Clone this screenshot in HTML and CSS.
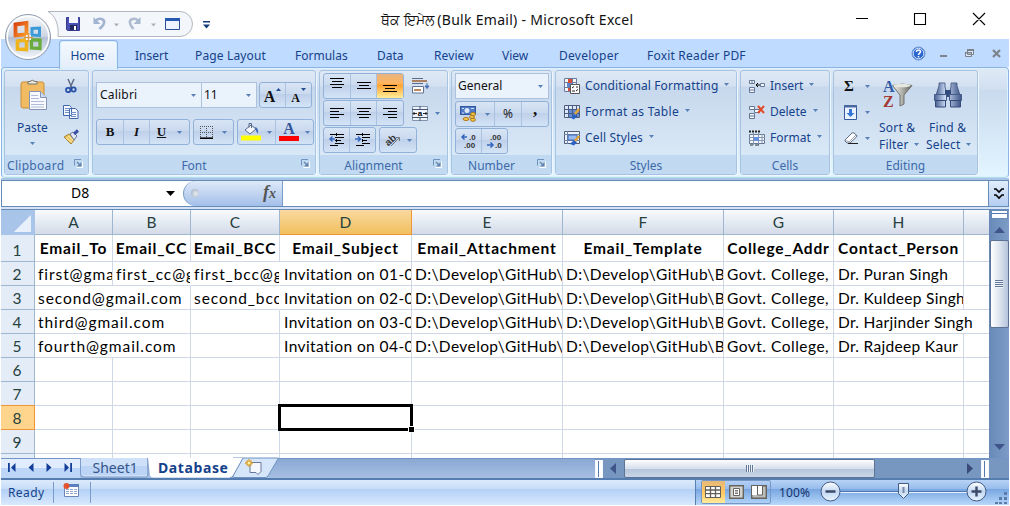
FILE: index.html
```html
<!DOCTYPE html>
<html lang="en">
<head>
<meta charset="utf-8">
<title>Bulk Email - Microsoft Excel</title>
<link rel="stylesheet" href="styles.css">
</head>
<body>
<svg width="0" height="0" class="defs">
  <defs>
    <linearGradient id="orb" x1="0" y1="0" x2="0" y2="1"><stop offset="0" stop-color="#f4f6f9"/><stop offset=".48" stop-color="#cfd6e2"/><stop offset=".52" stop-color="#b3c0d4"/><stop offset="1" stop-color="#f6f9fd"/></linearGradient>
    <linearGradient id="orange" x1="0" y1="0" x2="1" y2="1"><stop offset="0" stop-color="#d9420f"/><stop offset="1" stop-color="#f99a2a"/></linearGradient>
    <linearGradient id="metal" x1="0" y1="0" x2="1" y2="0"><stop offset="0" stop-color="#f2f2f0"/><stop offset=".5" stop-color="#b0b0aa"/><stop offset="1" stop-color="#5e5e5c"/></linearGradient>
    <linearGradient id="lens" x1="0" y1="0" x2="1" y2="0"><stop offset="0" stop-color="#4a6192"/><stop offset=".4" stop-color="#cbdcf5"/><stop offset="1" stop-color="#3f5688"/></linearGradient>
    <linearGradient id="knob" x1="0" y1="0" x2="0" y2="1"><stop offset="0" stop-color="#ffffff"/><stop offset=".5" stop-color="#c3d8f3"/><stop offset="1" stop-color="#e8f3ff"/></linearGradient>
    <symbol id="caret" viewBox="0 0 5 3"><path d="M0 0h5L2.500 3z"/></symbol>
    <symbol id="launch" viewBox="0 0 9 9"><path d="M.5 6.500V.5H7" fill="none" stroke="#6f92bf"/><path d="M2.500 8.500h6v-6" fill="none" stroke="#fff"/><path d="M3 3l3 3" stroke="#6383ad" stroke-width="1.300"/><path d="M7.500 3v4.500H3z" fill="#6383ad"/></symbol>
  </defs>
</svg>

<div class="window">
  <header class="title">
    <div class="orb">
      <svg width="48" height="48" viewBox="0 0 48 48">
        <circle cx="24" cy="24" r="22.500" fill="url(#orb)" stroke="#8d99ab"/>
        <circle cx="24" cy="24" r="20.800" fill="none" stroke="#fff" stroke-width="1.500"/>
        <path d="M11.500 11.500l11-1.500v11.500l-11 1z" fill="none" stroke="url(#orange)" stroke-width="3.800"/>
        <path d="M28 15.500l7.500-.5v7.500l-7.500-.5z" fill="none" stroke="#3a9bd8" stroke-width="3"/>
        <path d="M13.500 28l9-1v9.500l-9-.5z" fill="none" stroke="#efb31c" stroke-width="3.600"/>
        <path d="M27.500 27h8.500v8.500l-8.500-.5z" fill="none" stroke="#69ab3c" stroke-width="3.300"/>
        <path d="M22 22h5v5h-5z" fill="#fff"/><path d="M20 24.500h9M24.500 20v9" stroke="#d99a4b" stroke-width="1.500"/>
      </svg>
    </div>
    <div class="quick">
      <svg width="145" height="26" viewBox="0 0 145 26">
        <path d="M0 .5h132a12.500 12.500 0 0 1 0 25H10C11 15 8 5 0 .5z" fill="#f3f6fb" stroke="#b3b8bf"/>
        <g>
          <path d="M18.500 6.500h13v13h-12l-1-1z" fill="#4a50b4" stroke="#34398e"/>
          <path d="M21 6h9v6h-9z" fill="#f4f6ff"/><path d="M22 14h7v5h-7z" fill="#22265e"/><path d="M26 15h2v4h-2z" fill="#fff"/>
        </g>
        <path d="M48 9.500c3-3 9-2 8 2.500-.5 3-3 4-4.500 6" fill="none" stroke="#a0b3d0" stroke-width="2.600"/><path d="M45.500 6v7h7z" fill="#a0b3d0"/>
        <path d="M66 12.500h5l-2.500 3z" fill="#b0b0b0"/>
        <path d="M90 9.500c-3-3-9-2-8 2.500 .4 3 2 4 3.500 6" fill="none" stroke="#b0bdd0" stroke-width="2.600"/><path d="M92.500 6v7h-7z" fill="#a9b9d0"/>
        <path d="M103 12.500h5l-2.500 3z" fill="#b0b0b0"/>
        <path d="M117.500 7.500h14v11h-14z" fill="#eef4ff" stroke="#2b4f97"/><path d="M117 7h15v3h-15z" fill="#2558b0"/>
      </svg>
      <svg class="more" width="7" height="8" viewBox="0 0 7 8"><path d="M0 0h7v1.500H0zM0 3.500h7L3.500 7.500z" fill="#173b7b"/></svg>
    </div>
    <h1>ਥੋਕ ਇਮੇਲ <span class="name">(Bulk Email) - Microsoft Excel</span></h1>
    <div class="controls">
      <svg width="130" height="16" viewBox="0 0 130 16"><path d="M0 8.500h12M58.500 3.500h11v11h-11zM117 3l12 12M129 3l-12 12" fill="none" stroke="#000" stroke-width="1.100"/></svg>
    </div>
  </header>

  <nav class="tabs">
    <span class="tab active">Home</span><span class="tab t-insert">Insert</span><span class="tab t-page">Page Layout</span><span class="tab t-formulas">Formulas</span><span class="tab t-data">Data</span><span class="tab t-review">Review</span><span class="tab t-view">View</span><span class="tab t-dev">Developer</span><span class="tab t-foxit">Foxit Reader PDF</span>
    <svg class="doc-controls" width="92" height="16" viewBox="0 0 92 16">
      <circle cx="7.500" cy="7.500" r="6.500" fill="#2b66ce" stroke="#6e94cf"/><circle cx="7.500" cy="7.500" r="5.300" fill="none" stroke="#dceaff" stroke-width="1"/>
      <path d="M5.500 6c0-3 4-2.500 4-.3C9.500 7.200 7.500 7 7.500 9M7.500 10v1.500" fill="none" stroke="#fff" stroke-width="1.500"/>
      <path d="M29 9h7v2h-7z" fill="#7d828b"/>
      <path d="M56.500 4.500h6v4h-6zM54.500 6.500h6v4h-6z" fill="#dbe9fc" stroke="#7d828b"/><path d="M56 3h7v2h-7zM54 6h7v1.500h-7z" fill="#7d828b"/>
      <path d="M82 4l7 7M89 4l-7 7" stroke="#7d828b" stroke-width="2.200"/>
    </svg>
  </nav>

  <section class="ribbon">
    <div class="group clipboard">
      <div class="body">
        <div class="paste">
          <svg width="28" height="32" viewBox="0 0 28 32"><rect x="1" y="3" width="23" height="26" rx="2" fill="#f0bb62" stroke="#c98d36"/><path d="M8 5V2.500h2Q12 0 15 2.500h2V5z" fill="#ece9df" stroke="#77736a"/><path d="M9.500 12.500h11l6 6v12h-17z" fill="#f8faff" stroke="#8394b4"/><path d="M20.500 12.500v6h6" fill="#cdd9ec" stroke="#8394b4"/><path d="M11 16.500h7M11 19.500h8M11 22.500h13M11 25.500h13M11 28h13" stroke="#aebcd6"/></svg>
          <span>Paste</span>
          <svg class="caret"><use href="#caret"/></svg>
        </div>
        <div class="clip-tools">
          <svg width="12" height="15" viewBox="0 0 12 15"><path d="M3 0l4 9M9 0L5 9" stroke="#5f6b86" stroke-width="1.500"/><circle cx="3.200" cy="11" r="2.200" fill="none" stroke="#2750a8" stroke-width="1.800"/><circle cx="8.600" cy="10.500" r="2.100" fill="none" stroke="#2750a8" stroke-width="1.800"/></svg>
          <svg width="16" height="14" viewBox="0 0 16 14"><path d="M.5.5h6l2 2v8h-8zM6.500 3.500h6l2.500 2.500v7.500H6.500z" fill="#f3f8ff" stroke="#4167ab"/><path d="M2 3.500h4M2 5.500h4M2 7.500h4M8 7.500h5M8 9.500h5M8 11.500h5" stroke="#7391c8"/></svg>
          <svg width="17" height="15" viewBox="0 0 17 15"><path d="M1 7l5-3 6 5-4 5z" fill="#e9c35e" stroke="#a9843c"/><path d="M7 4l3-2 4 4-3 4z" fill="#e6e9f4" stroke="#65729b"/><path d="M11 4l4-3.500" stroke="#3b52a5" stroke-width="3"/><path d="M3 8l6 4M5 6l5 4" stroke="#fff2b5"/></svg>
        </div>
      </div>
      <footer>Clipboard<svg class="launch"><use href="#launch"/></svg></footer>
    </div>

    <div class="group font">
      <div class="body">
        <div class="row">
          <div class="combo face"><span>Calibri</span><svg class="caret"><use href="#caret"/></svg></div>
          <div class="combo size"><span>11</span><svg class="caret"><use href="#caret"/></svg></div>
          <div class="set grow"><span class="btn"><b class="serif big">A</b><svg width="5" height="3"><path d="M0 3h5L2.500 0z" fill="#254a91"/></svg></span><span class="btn"><b class="serif small">A</b><svg width="5" height="3"><path d="M0 0h5L2.500 3z" fill="#254a91"/></svg></span></div>
        </div>
        <div class="row second">
          <div class="set biu"><span class="btn"><b class="serif">B</b></span><span class="btn"><b class="serif"><i>I</i></b></span><span class="btn under"><b class="serif"><u>U</u></b><svg class="caret"><use href="#caret"/></svg></span></div>
          <div class="set edge"><span class="btn"><svg width="13" height="13" viewBox="0 0 13 13"><path d="M.5 0v12M6.500 0v12M12.500 0v12M0 .5h13M0 6.500h13" stroke="#555" stroke-dasharray="1 1"/><path d="M0 12.200h13" stroke="#000" stroke-width="1.600"/></svg><svg class="caret"><use href="#caret"/></svg></span></div>
          <div class="set paint"><span class="btn"><svg width="20" height="18" viewBox="0 0 20 18"><path d="M4 7l6-5 5 4-6 5z" fill="#f4f7fc" stroke="#58698b"/><path d="M8 4.500V.5h2.500V5" fill="none" stroke="#58698b"/><path d="M14 4q4 1 3 7l-2-3z" fill="#426db8"/><path d="M0 12.500h20v5H0z" fill="#ff0"/></svg><svg class="caret"><use href="#caret"/></svg></span><span class="btn"><span class="ink"><b class="serif">A</b></span><svg class="caret"><use href="#caret"/></svg></span></div>
        </div>
      </div>
      <footer class="offset">Font<svg class="launch"><use href="#launch"/></svg></footer>
    </div>

    <div class="group align">
      <div class="body">
        <div class="row">
          <div class="set three"><span class="btn"><svg width="14" height="16"><path d="M0 .5h14M2 3.500h10M0 6.500h14M2 9.500h10" stroke="#000"/></svg></span><span class="btn"><svg width="14" height="16"><path d="M0 4.500h14M2 7.500h10M0 10.500h14" stroke="#000"/></svg></span><span class="btn hot"><svg width="14" height="16"><path d="M0 7.500h14M2 10.500h10M0 13.500h14" stroke="#000"/></svg></span></div>
          <svg class="wrap" width="17" height="17" viewBox="0 0 17 17"><path d="M0 .5h11M0 5.500h11" stroke="#5b6d8e"/><path d="M0 3h15" stroke="#a0622f" stroke-width="1.500"/><path d="M.5 8.500v6.500h11V8.500z" fill="#fff" stroke="#66758f"/><path d="M2 12h7" stroke="#a0622f" stroke-width="1.500"/><path d="M15 5v4M13 8h4l-2 2.500z" fill="#4a70b4" stroke="#4a70b4"/></svg>
        </div>
        <div class="row">
          <div class="set three"><span class="btn"><svg width="14" height="13"><path d="M0 1.500h14M0 4.500h9M0 7.500h14M0 10.500h9" stroke="#000"/></svg></span><span class="btn"><svg width="14" height="13"><path d="M0 1.500h14M2 4.500h10M0 7.500h14M2 10.500h10" stroke="#000"/></svg></span><span class="btn"><svg width="14" height="13"><path d="M0 1.500h14M5 4.500h9M0 7.500h14M5 10.500h9" stroke="#000"/></svg></span></div>
          <div class="merge"><svg width="16" height="15" viewBox="0 0 16 15"><path d="M.5.5h15v14H.5z" fill="#eef3fc" stroke="#8394ad"/><path d="M0 3.500h16M0 11.500h16M8 0v3M8 12v3" stroke="#455774"/><path d="M1 7.500h4M11 7.500h4M2.500 6L1 7.500 2.500 9M13.500 6L15 7.500 13.500 9" stroke="#222" fill="none"/><text x="5.700" y="10" class="tiny">a</text></svg><svg class="caret"><use href="#caret"/></svg></div>
        </div>
        <div class="row">
          <div class="set two"><span class="btn"><svg width="16" height="14"><path d="M1 1.500h14M6 4.500h9M6 7.500h6M6 10.500h9M1 12.500h8" stroke="#000" stroke-width="1.200"/><path d="M7.500 0v14" stroke="#000" stroke-dasharray="1 1"/><path d="M6 6H1M3.500 3.500L1 6l2.500 2.500" stroke="#3567be" stroke-width="1.500" fill="none"/></svg></span><span class="btn"><svg width="16" height="14"><path d="M1 1.500h14M7 4.500h8M7 7.500h5M7 10.500h8M1 12.500h8" stroke="#000" stroke-width="1.200"/><path d="M7.500 0v14" stroke="#000" stroke-dasharray="1 1"/><path d="M0 6h5M3 3.500L5.500 6 3 8.500" stroke="#3567be" stroke-width="1.500" fill="none"/></svg></span></div>
          <div class="set angle"><span class="btn"><svg width="17" height="16" viewBox="0 0 17 16"><text x="0" y="12" class="ab" transform="rotate(-42 5 9)">ab</text><path d="M6 14l8-8M11 5.500h3.500V9" fill="none" stroke="#777"/></svg><svg class="caret"><use href="#caret"/></svg></span></div>
        </div>
      </div>
      <footer class="offset">Alignment<svg class="launch"><use href="#launch"/></svg></footer>
    </div>

    <div class="group number">
      <div class="body">
        <div class="combo general"><span>General</span><svg class="caret"><use href="#caret"/></svg></div>
        <div class="set money"><span class="btn"><svg width="17" height="16" viewBox="0 0 17 16"><rect x=".5" y=".5" width="15" height="8" fill="#4f79c4" stroke="#31579c"/><circle cx="7" cy="4.500" r="2.500" fill="#dbe8fb"/><path d="M2 2.500h2M11 2.500h3M2 7h2" stroke="#d5e2f8"/><ellipse cx="13" cy="8" rx="2.500" ry="1.500" fill="#f5c84e" stroke="#ad7a1c"/><ellipse cx="12" cy="11" rx="2.500" ry="1.500" fill="#f5c84e" stroke="#ad7a1c"/><ellipse cx="6" cy="13" rx="3" ry="1.500" fill="#f5c84e" stroke="#ad7a1c"/><ellipse cx="13" cy="13.800" rx="2.500" ry="1.500" fill="#f5c84e" stroke="#ad7a1c"/></svg><svg class="caret"><use href="#caret"/></svg></span><span class="btn pct">%</span><span class="btn comma"><b class="serif">,</b></span></div>
        <div class="set decimals"><span class="btn"><svg width="16" height="16" viewBox="0 0 16 16"><text x="8" y="7" class="dec">.0</text><text x="3" y="15" class="dec">.00</text><path d="M6 4H1M3.500 1.500L1 4l2.500 2.500" fill="none" stroke="#3665bd" stroke-width="1.500"/></svg></span><span class="btn"><svg width="16" height="16" viewBox="0 0 16 16"><text x="3" y="7" class="dec">.00</text><text x="8" y="15" class="dec">.0</text><path d="M0 12h6M3.500 9.500L6 12l-2.500 2.500" fill="none" stroke="#3665bd" stroke-width="1.500"/></svg></span></div>
      </div>
      <footer class="offset">Number<svg class="launch"><use href="#launch"/></svg></footer>
    </div>

    <div class="group styles">
      <div class="body list">
        <div class="item"><svg width="16" height="16" viewBox="0 0 16 16"><path d="M.5.5h12v13H.5z" fill="#f4f7fc" stroke="#697a9b"/><path d="M4.500 1v12M8.500 1v12M0 4.500h13M0 9.500h13" stroke="#697a9b"/><path d="M4 1h4v4H4zM4 10h3v3H4z" fill="#d94c36"/><path d="M3 5h6v4H3z" fill="#5b85ce"/><path d="M6.500 6.500h9v9h-9z" fill="#fff" stroke="#555"/><path d="M8 10l2-1.500M8 13h3M12 9h2M12 13l2-1.500" stroke="#222"/></svg><span class="w-cond">Conditional Formatting</span><svg class="caret"><use href="#caret"/></svg></div>
        <div class="item"><svg width="16" height="15" viewBox="0 0 16 15"><path d="M.5.5h15v12H.5z" fill="#dce7fa" stroke="#515d76"/><path d="M4 4h11v8H4z" fill="#648bd0"/><path d="M4.500 0v13M8.500 0v13M12.500 0v13M0 4.500h16M0 8.500h16" stroke="#485b82"/><path d="M7 13l3-4 3 2-3 3.500z" fill="#2862c8"/><path d="M11 9l4-5" stroke="#e1a539" stroke-width="2.500"/></svg><span class="w-table">Format as Table</span><svg class="caret"><use href="#caret"/></svg></div>
        <div class="item"><svg width="16" height="15" viewBox="0 0 16 15"><path d="M.5.5h15v12H.5z" fill="#edf3fd" stroke="#515d76"/><path d="M3.500 0v13M0 3.500h16M0 9.500h16" stroke="#7487a8"/><path d="M4 4h9v5H4z" fill="#9abaf0" stroke="#3e69b7"/><path d="M6 13l4-4 3 2-3 3.500z" fill="#2862c8"/><path d="M11 10l4-5" stroke="#e1a539" stroke-width="2.500"/></svg><span class="w-cell">Cell Styles</span><svg class="caret"><use href="#caret"/></svg></div>
      </div>
      <footer>Styles</footer>
    </div>

    <div class="group cells">
      <div class="body list">
        <div class="item"><svg width="16" height="15" viewBox="0 0 16 15"><path d="M.5 1.500h5v3h-5zM.5 8.500h5v5h-5zM.5 11h5M3 2v2M11.500 4.500h4v3h-4z" fill="#f5f8ff" stroke="#647795"/><path d="M7 6h4M9 4L7 6l2 2" stroke="#000" fill="none"/></svg><span class="w-ins">Insert</span><svg class="caret"><use href="#caret"/></svg></div>
        <div class="item"><svg width="16" height="15" viewBox="0 0 16 15"><path d="M.5 1.500h5v3h-5zM.5 8.500h5v5h-5zM.5 11h5M5.500 4.500h5v3h-5z" fill="#f5f8ff" stroke="#647795"/><path d="M9 1l6 7M15 1L9 8" stroke="#e24a25" stroke-width="2"/></svg><span>Delete</span><svg class="caret"><use href="#caret"/></svg></div>
        <div class="item"><svg width="16" height="16" viewBox="0 0 16 16"><path d="M0 1.500h12" stroke="#222" stroke-width="2" stroke-dasharray="2 1"/><path d="M.5 4.500h15v9H.5z" fill="#f5f8ff" stroke="#647795"/><path d="M4.500 3v12M9.500 3v12M13 4v9M0 7.500h16M0 10.500h16" stroke="#8797ae"/><path d="M5 7h5v4H5z" fill="#6591df"/><path d="M1 15h3M6 15h4" stroke="#333"/></svg><span>Format</span><svg class="caret"><use href="#caret"/></svg></div>
      </div>
      <footer>Cells</footer>
    </div>

    <div class="group editing">
      <div class="body">
        <div class="edit-tools">
          <div><b class="serif sigma">Σ</b><svg class="caret"><use href="#caret"/></svg></div>
          <div><svg width="13" height="15" viewBox="0 0 13 15"><path d="M.5.5h12v14H.5z" fill="#eaf2ff" stroke="#355a9b"/><path d="M0 0h13v2.500H0z" fill="#49689e"/><path d="M5 4h3v4h2.500l-4 4-4-4H5z" fill="#3475d6"/></svg><svg class="caret"><use href="#caret"/></svg></div>
          <div><svg width="14" height="12" viewBox="0 0 14 12"><path d="M1 8l7-7q1-.7 2 0l2.500 2q.8 1 0 2L6 11H3L1 9z" fill="#fff" stroke="#5e6b86"/><path d="M1 8l4 2 7-7" fill="none" stroke="#99a4ba"/><path d="M4 11.500h10" stroke="#222"/></svg><svg class="caret"><use href="#caret"/></svg></div>
        </div>
        <div class="large sort">
          <svg width="30" height="30" viewBox="0 0 30 30"><text x="0" y="13" class="az a">A</text><text x="0" y="28" class="az z">Z</text><path d="M9.500 6.500q10-3 19.500 0L21 16v9l-4 2V16z" fill="url(#metal)" stroke="#73736e"/><ellipse cx="19" cy="6.500" rx="8.500" ry="1.800" fill="#e7e7e1"/></svg>
          <span>Sort &amp;</span><span>Filter<svg class="caret"><use href="#caret"/></svg></span>
        </div>
        <div class="large find">
          <svg width="28" height="26" viewBox="0 0 28 26"><path d="M5 4V1h6v4l2 8H2zM17 5V1h6v3l3 9H15z" fill="url(#lens)" stroke="#50648e"/><path d="M11 8h6v7h-6z" fill="#344b7d"/><path d="M.5 12.500h12v6h-12zM15.500 12.500h12v6h-12z" fill="url(#lens)" stroke="#455b88"/><path d="M1.500 18.500h10v6.500h-10zM16.500 18.500h10v6.500h-10z" fill="url(#lens)" stroke="#344a79"/></svg>
          <span>Find &amp;</span><span>Select<svg class="caret"><use href="#caret"/></svg></span>
        </div>
      </div>
      <footer>Editing</footer>
    </div>
  </section>

  <div class="formula">
    <div class="namebox"><span>D8</span><svg width="9" height="5"><path d="M0 0h9L4.500 5z"/></svg></div>
    <div class="fx"><i class="dot"></i><em>f<small>x</small></em></div>
    <div class="input"></div>
    <div class="expand"><svg width="10" height="12" viewBox="0 0 10 12"><path d="M0 1h2l3 3 3-3h2M0 7h2l3 3 3-3h2" fill="none" stroke="#000" stroke-width="1.600"/></svg></div>
  </div>

  <main class="book">
    <div class="sheet">
      <span class="corner"></span><span class="col">A</span><span class="col">B</span><span class="col">C</span><span class="col sel">D</span><span class="col">E</span><span class="col">F</span><span class="col">G</span><span class="col">H</span><span class="col last"></span>

      <span class="num">1</span><span class="cell head">Email_To</span><span class="cell head">Email_CC</span><span class="cell head">Email_BCC</span><span class="cell head">Email_Subject</span><span class="cell head">Email_Attachment</span><span class="cell head">Email_Template</span><span class="cell head">College_Addr</span><span class="cell head">Contact_Person</span><span class="cell last"></span>

      <span class="num">2</span><span class="cell mail">first@gma</span><span class="cell mail noline">first_cc@g</span><span class="cell mail noline">first_bcc@g</span><span class="cell subject">Invitation on 01-0</span><span class="cell path">D:\Develop\GitHub\</span><span class="cell path">D:\Develop\GitHub\B</span><span class="cell college">Govt. College,</span><span class="cell person">Dr. Puran Singh</span><span class="cell last"></span>

      <span class="num">3</span><span class="cell mail wide">second@gmail.com</span><span class="cell mail noline">second_bcc</span><span class="cell subject">Invitation on 02-0</span><span class="cell path">D:\Develop\GitHub\</span><span class="cell path">D:\Develop\GitHub\B</span><span class="cell college">Govt. College,</span><span class="cell person">Dr. Kuldeep Singh</span><span class="cell last"></span>

      <span class="num">4</span><span class="cell mail wide">third@gmail.com</span><span class="cell"></span><span class="cell subject">Invitation on 03-0</span><span class="cell path">D:\Develop\GitHub\</span><span class="cell path">D:\Develop\GitHub\B</span><span class="cell college">Govt. College,</span><span class="cell person wide last">Dr. Harjinder Singh</span>

      <span class="num">5</span><span class="cell mail wide">fourth@gmail.com</span><span class="cell"></span><span class="cell subject">Invitation on 04-0</span><span class="cell path">D:\Develop\GitHub\</span><span class="cell path">D:\Develop\GitHub\B</span><span class="cell college">Govt. College,</span><span class="cell person">Dr. Rajdeep Kaur</span><span class="cell last"></span>

      <span class="num">6</span><span class="cell"></span><span class="cell"></span><span class="cell"></span><span class="cell"></span><span class="cell"></span><span class="cell"></span><span class="cell"></span><span class="cell"></span><span class="cell last"></span>
      <span class="num above">7</span><span class="cell"></span><span class="cell"></span><span class="cell"></span><span class="cell"></span><span class="cell"></span><span class="cell"></span><span class="cell"></span><span class="cell"></span><span class="cell last"></span>
      <span class="num sel">8</span><span class="cell"></span><span class="cell"></span><span class="cell"></span><span class="cell current"><i class="cursor"></i></span><span class="cell"></span><span class="cell"></span><span class="cell"></span><span class="cell"></span><span class="cell last"></span>
      <span class="num">9</span><span class="cell"></span><span class="cell"></span><span class="cell"></span><span class="cell"></span><span class="cell"></span><span class="cell"></span><span class="cell"></span><span class="cell"></span><span class="cell last"></span>
      <span class="num cut"></span><span class="cell cut"></span><span class="cell cut"></span><span class="cell cut"></span><span class="cell cut"></span><span class="cell cut"></span><span class="cell cut"></span><span class="cell cut"></span><span class="cell cut"></span><span class="cell cut last"></span>
    </div>
    <div class="vscroll">
      <i class="split"></i>
      <svg width="11" height="6"><path d="M0 6h11L5.500 0z" fill="#40568a"/></svg>
      <div class="vthumb"><i></i></div>
      <svg class="down" width="11" height="6"><path d="M0 0h11L5.500 6z" fill="#40568a"/></svg>
    </div>
  </main>

  <div class="sheetbar">
    <div class="steps"><svg width="64" height="9" viewBox="0 0 64 9"><path d="M0 0h1.800v9H0zM7.500 0v9L3 4.500zM25.500 0v9L20.500 4.500zM38.500 0v9l5-4.500zM56.500 0v9l4.500-4.500zM62.200 0H64v9h-1.800z" fill="#153f96"/></svg></div>
    <svg class="sheets" width="200" height="20" viewBox="0 0 200 20">
      <path d="M198.500 0L188 18q-1 1.500-3 1.500H153V0z" fill="#d5e5fa" stroke="#6f93c4"/>
      <path d="M0 0h67v19H4q-2 0-3-2z" fill="#cfe1f8"/><path d="M0 8h67v9H0z" fill="#bcd5f6"/><path d="M.5 0v16q0 3 4 3H66q2 0 2-3V0" fill="none" stroke="#7c9cc9"/>
      <path d="M68 0h95L153 18q-1 1.500-3 1.500H73q-2 0-3-2z" fill="#fff"/><path d="M163 0l-10 18q-1 1.500-3 1.500" fill="none" stroke="#6889b8"/>
      <text x="12.500" y="14.500" class="s1">Sheet1</text><text x="78" y="14.500" class="s2">Database</text>
      <path d="M170 4.500h11v9l-3 3-2-2h-6z" fill="#f5f8fe" stroke="#68799a"/><path d="M169 1v8M165 5h8M166.500 2.500l5 5M171.500 2.500l-5 5" stroke="#d99b27" stroke-width="1.300"/><circle cx="169" cy="5" r="1.500" fill="#fff2a0"/>
    </svg>
    <div class="hscroll">
      <i class="hsplit"></i>
      <svg width="6" height="11"><path d="M6 0v11L0 5.500z" fill="#40568a"/></svg>
      <div class="hthumb"><i></i></div>
      <svg class="right" width="6" height="11"><path d="M0 0v11l6-5.500z" fill="#3a4a78"/></svg>
      <i class="hsplit end"></i>
    </div>
  </div>

  <footer class="status">
    <span class="ready">Ready</span>
    <span class="macro"><svg width="16" height="14" viewBox="0 0 16 14"><path d="M1.500 1.500h14v12h-14z" fill="#fff" stroke="#6c86b5"/><path d="M1 1h15v3H1z" fill="#5b80bf"/><path d="M3 6.500h11M3 8.500h11M3 10.500h11" stroke="#8fa8d2" stroke-dasharray="3 1"/><circle cx="3.500" cy="3" r="3" fill="#e3542e"/></svg></span>
    <div class="zoom">
      <div class="views"><span class="on"><svg width="16" height="12" viewBox="0 0 16 12"><path d="M.5.5h15v11H.5z" fill="#fff" stroke="#625f58"/><path d="M5.500 0v12M10.500 0v12M0 4h16M0 7.700h16" stroke="#625f58" stroke-width="1.300"/></svg></span><span><svg width="15" height="14" viewBox="0 0 15 14"><path d="M.7.7h13.600v12.600H.7z" fill="#d2d2ce" stroke="#66645f" stroke-width="1.400"/><path d="M4.500 3.500h6v7h-6z" fill="#fff" stroke="#66645f"/><path d="M6 5.500h3M6 7h3M6 8.500h3" stroke="#777"/></svg></span><span><svg width="16" height="14" viewBox="0 0 16 14"><path d="M.7.700h14.600v12.600H.7z" fill="#bdbdb9" stroke="#66645f" stroke-width="1.400"/><path d="M1 1h5v9H1zM7 1h4v9H7z" fill="#fff"/><path d="M6.500 0v10h5V0" fill="none" stroke="#66645f"/></svg></span></div>
      <span class="percent">100%</span>
      <svg class="slider" width="167" height="21" viewBox="0 0 167 21"><path d="M20 10.500h127" stroke="#5077ad"/><path d="M20 11.500h127" stroke="#e5f1ff"/><g fill="url(#knob)" stroke="#445b82"><circle cx="10.500" cy="10.500" r="9.500"/><circle cx="156.500" cy="10.500" r="9.500"/><path d="M78.500 2.500h10v10l-5 5-5-5z"/></g><path d="M83.500 6v6" stroke="#7889a5" stroke-width="2"/><path d="M5.500 10.500h10M151.500 10.500h10M156.500 5.500v10" stroke="#3c4a66" stroke-width="2.400"/></svg>
      <svg class="grip" width="12" height="12"><path d="M9 0h3v3H9zM4 5h3v3H4zM9 5h3v3H9zM0 10h3v2H0zM4 10h3v2H4zM9 10h3v2H9z" fill="#5d7baa"/></svg>
    </div>
  </footer>
</div>
</body>
</html>
```

FILE: styles.css
```css
* { box-sizing: border-box; }
body { margin: 0; width: 1010px; height: 506px; overflow: hidden; background: #fff; font: 12px/16px "Noto Sans", sans-serif; color: #15428b; }
svg { display: block; flex: none; overflow: visible; }
.defs { position: absolute; }
.window { width: 1008px; height: 505px; margin-left: 1px; display: flex; flex-direction: column; }
.serif { font-family: "Liberation Serif", serif; color: #111; }
.caret { width: 5px; height: 3px; fill: #5880b8; }

/* title bar */
.title { height: 39px; display: flex; position: relative; flex: none; }
.orb { position: absolute; z-index: 3; left: 3px; top: 13px; }
.quick { display: flex; margin: 11px 0 0 47px; width: 333px; }
.more { margin: 10px 0 0 10px; }
h1 { margin: 10px 0 0; font: 14px/20px "Noto Sans", sans-serif; color: #111; white-space: nowrap; width: 260px; }
.name { letter-spacing: .29px; }
.controls { margin: 10px 0 0 215px; }

/* ribbon tabs */
.tabs { height: 28px; flex: none; background: #bfdbff; position: relative; display: flex; padding-left: 58px; }
.tab { line-height: 33px; white-space: nowrap; }
.active { width: 59px; height: 29px; margin-top: 1px; padding-right: 2px; line-height: 30px; text-align: center; background: linear-gradient(#f4f9ff, #e3edf9); border: 1px solid #8db2e3; border-bottom: 0; border-radius: 4px 4px 0 0; position: relative; z-index: 2; box-shadow: inset 0 0 0 1px #d8f1ff; }
.t-insert { margin-left: 17px; width: 60px; }
.t-page { width: 100px; letter-spacing: .15px; }
.t-formulas { width: 82px; }
.t-data { width: 57px; }
.t-review { width: 68px; letter-spacing: .1px; }
.t-view { width: 57px; }
.t-dev { width: 88px; letter-spacing: .25px; }
.t-foxit { letter-spacing: .2px; }
.doc-controls { position: absolute; right: 6px; top: 7px; }

/* ribbon */
.ribbon { height: 111px; flex: none; display: flex; gap: 3px; padding: 2px 0 0 2px; border: 1px solid #8db2e3; border-bottom-color: #b5d9ee; border-radius: 3px 4px 4px 4px; background: linear-gradient(#e0eaf6, #d0dff0 20%, #c9daee 21%, #e3f5ff); box-shadow: inset 0 0 0 1px #d9f3ff; }
.group { height: 105px; flex: none; border: 1px solid #a7c3e2; border-radius: 3px; background: linear-gradient(#dfe9f5, #d4e1f0 15px, #c7d8ed 16px, #d9e8f6 84px); display: flex; flex-direction: column; box-shadow: 1px 1px 0 #eef7ff; }
.body { height: 84px; flex: none; }
.group footer { height: 19px; background: #c1d9f1; color: #3e6aaa; text-align: center; line-height: 21px; position: relative; }
.group .offset { padding-right: 20px; }
.launch { position: absolute; right: 5px; top: 4px; width: 9px; height: 9px; }
.clipboard { width: 85px; }
.font { width: 224px; }
.align { width: 129px; }
.number { width: 101px; }
.styles { width: 182px; }
.cells { width: 90px; }
.editing { width: 145px; }
.row { display: flex; }
.set { height: 26px; display: flex; border: 1px solid #92b1d9; border-radius: 3px; background: linear-gradient(#d8e5f5, #cad9ee 45%, #becfe9 46%, #d4e4f7); }
.btn { flex: 1; display: flex; align-items: center; justify-content: center; border-left: 1px solid #a9c2e2; }
.btn:first-child { border-left: 0; }
.combo { height: 26px; border: 1px solid #abc1de; background: #eaf2fb; display: flex; align-items: center; justify-content: space-between; padding: 0 5px 0 3px; color: #111; }

.clipboard .body { display: flex; padding: 8px 0 0 14px; }
.clipboard footer { text-align: left; padding-left: 2px; letter-spacing: .3px; }
.paste { width: 44px; display: flex; flex-direction: column; }
.paste > svg:first-child { margin-left: 1px; }
.paste span { margin: 9px 0 6px -2px; }
.paste .caret { margin-left: 11px; }
.clip-tools { display: flex; flex-direction: column; gap: 11px; }
.clip-tools svg:first-child { margin-left: 2px; }

.font .body { padding: 11px 0 0 3px; }
.face { width: 106px; }
.face span { letter-spacing: .2px; }
.size { width: 56px; margin-left: -1px; padding-left: 2px; }
.grow { width: 53px; margin-left: 2px; }
.grow .btn { align-items: flex-start; padding-top: 5px; gap: 1px; }
.big { font-size: 16px; line-height: 17px; }
.small { font-size: 12px; line-height: 20px; }
.second { margin-top: 11px; gap: 3px; }
.biu { width: 94px; font-size: 13px; }
.biu .btn { flex: none; width: 26px; }
.biu .under { width: 40px; gap: 11px; }
.edge { width: 41px; }
.edge .btn { gap: 9px; }
.paint { width: 77px; }
.paint .btn { gap: 6px; }
.ink { width: 20px; height: 18px; border-bottom: 5px solid #f00; text-align: center; line-height: 11px; }
.ink b { color: #33559c; font-size: 16px; }

.align .body, .number .body { padding: 2px 0 0 3px; display: flex; flex-direction: column; gap: 1px; }
.three { width: 81px; }
.hot { background: linear-gradient(#e8b480, #ffb55d 40%, #ffa02f 45%, #ffee9b); }
.wrap { margin: 5px 0 0 8px; }
.merge { display: flex; align-items: center; gap: 7px; margin-left: 8px; }
.tiny { font: bold 8px "Liberation Sans", sans-serif; fill: #000; }
.two { width: 53px; }
.angle { width: 38px; margin-left: 3px; }
.angle .btn { gap: 5px; }
.ab { font: bold 10px "Liberation Sans", sans-serif; fill: #333; }
.general { width: 94px; padding-left: 2px; }
.money { width: 94px; margin-top: 1px; }
.money .btn:first-child { flex: none; width: 38px; gap: 8px; }
.pct { font-size: 12px; color: #222; }
.comma { font-size: 17px; }
.comma b { margin-top: -9px; }
.decimals { width: 53px; }
.dec { font: bold 8px "Liberation Sans", sans-serif; fill: #333; }

.list { padding: 2px 0 0 8px; display: flex; flex-direction: column; }
.item { height: 26px; display: flex; align-items: center; white-space: nowrap; }
.item > svg:first-child { margin-right: 5px; }
.item .caret { margin: -3px 0 0 6px; }
.w-cond { letter-spacing: .12px; }
.w-table { letter-spacing: .33px; }
.w-cell { letter-spacing: .15px; }

.editing .body { display: flex; }
.edit-tools { width: 45px; padding: 2px 0 0 10px; }
.edit-tools div { height: 26px; display: flex; align-items: center; justify-content: space-between; width: 26px; }
.sigma { font-size: 15px; }
.large { display: flex; flex-direction: column; white-space: nowrap; }
.large > span { line-height: 17px; display: flex; align-items: center; gap: 5px; letter-spacing: .2px; }
.large > svg { margin-bottom: 10px; }
.sort { width: 47px; padding-top: 8px; }
.sort > svg { margin-left: 4px; }
.find { padding-top: 11px; }
.find > svg { margin: 0 0 11px 8px; }
.find > span:nth-child(2) { margin-left: 3px; }
.az { font: bold 16px "Liberation Serif", serif; }
.a { fill: #315aa8; }
.z { fill: #a33832; }

/* formula bar */
.formula { height: 27px; margin-top: 2px; flex: none; display: flex; border: 1px solid #658bb9; background: #fff; box-shadow: 0 -2px #a9c4e5; }
.namebox { width: 181px; display: flex; align-items: center; padding: 0 8px 1px 69px; justify-content: space-between; color: #000; font-size: 14px; }
.fx { width: 100px; border: 1px solid #7a9cc9; border-width: 0 1px 0 1px; border-radius: 13px 0 0 13px; background: linear-gradient(#dfe9f8, #a3bfe8); display: flex; justify-content: space-between; padding: 0 6px 2px 7px; align-items: center; }
.dot { width: 8px; height: 8px; border-radius: 50%; background: radial-gradient(circle at 60% 60%, #e9edf2, #9aa8bc); }
.fx em { font: italic bold 18px/20px "Liberation Serif", serif; color: #555; }
.fx small { font-size: 14px; }
.input { flex: 1; }
.expand { width: 20px; border-left: 1px solid #658bb9; background: linear-gradient(#e2edfb, #b4cdf0); display: flex; align-items: center; justify-content: center; }

/* worksheet */
.book { height: 251px; flex: none; display: flex; border-top: 2px solid #d5e3f5; position: relative; }
.sheet { width: 988px; border-top: 1px solid #658bb9; display: grid; grid-template-columns: 34px 78px 78px 89px 132px 151px 161px 110px 130px 25px; grid-template-rows: 25px 27px repeat(8, 24px) 4px; font: 15.500px/24px Lato, sans-serif; color: #000; }
.corner { background: linear-gradient(135deg, transparent 64%, #e8f0fb 65%) #a9c4e9; border: 2px solid #a9c4e9; border-width: 2px 4px 3px 2px; box-shadow: inset 0 0 0 0 #9eb6ce; }
.col { background: linear-gradient(#f8fbfe, #d3dbe8); border: solid #9eb6ce; border-width: 0 1px 1px 0; text-align: center; color: #27413e; line-height: 25px; }
.col.sel { background: linear-gradient(#f9d99f, #f1c05e); border-color: #f29536; }
.num { background: #e4ecf7; border: solid #9eb6ce; border-width: 0 1px 1px 0; text-align: center; color: #27413e; padding-right: 1px; }
.num:nth-child(11) { line-height: 30px; }
.num.sel { background: #ffd58d; border-color: #f29536; }
.num.above { border-bottom-color: #f29536; }
.cell { border: solid #d0d7e5; border-width: 0 1px 1px 0; padding-left: 3px; overflow: hidden; white-space: nowrap; }
.mail { letter-spacing: .92px; }
.subject { letter-spacing: .42px; padding-left: 4px; }
.path { letter-spacing: .4px; }
.college { letter-spacing: .5px; }
.person { letter-spacing: .32px; padding-left: 4px; }
.head { font-weight: bold; text-align: center; padding: 0; line-height: 26px; letter-spacing: .82px; }
.noline { border-right-color: #fff; }
.last { border-right: 0; }
.wide { grid-column: span 2; }
.cut { border-bottom: 0; }
.current { position: relative; overflow: visible; }
.cursor { position: absolute; z-index: 2; left: -2px; top: -2px; width: 135px; height: 27px; border: 3px solid #000; }
.cursor::after { content: ""; position: absolute; right: -4px; bottom: -4px; width: 5px; height: 5px; background: #000; box-shadow: 0 0 0 1px #fff; }
.vscroll { width: 20px; border-top: 1px solid #658bb9; background: linear-gradient(90deg, #6889b8, #7d9cc6); display: flex; flex-direction: column; align-items: center; }
.split { width: 17px; height: 9px; border: 1px solid #658bb9; background: linear-gradient(#fff 2px, #5479ae 2px, #5479ae 3px, #fff 3px); margin-bottom: 8px; }
.vthumb { width: 19px; height: 88px; margin-top: 7px; border: 1px solid #5d7395; border-radius: 2px; background: linear-gradient(90deg, #fff, #dde4ee 50%, #b5c4db); display: flex; align-items: center; justify-content: center; }
.vthumb i { width: 8px; height: 8px; background: repeating-linear-gradient(#647896 0 1px, #eef3fa 1px 2px); }
.down { margin-top: auto; margin-bottom: 8px; }

/* sheet tabs */
.sheetbar { height: 20px; flex: none; display: flex; border-top: 1px solid #7195c6; background: linear-gradient(#8ba8d2, #a6bfe3); }
.steps { width: 79px; background: linear-gradient(#e1edfc 50%, #bdd6f8 50%); padding: 4px 0 0 7px; }
.sheets { margin-top: -1px; }
.s1 { font: 14px "Noto Sans", sans-serif; fill: #36558c; }
.s2 { font: bold 14px "Noto Sans", sans-serif; fill: #15428b; letter-spacing: .6px; }
.hscroll { margin-left: auto; width: 414px; display: flex; align-items: center; background: #7797c1; }
.hsplit { width: 8px; height: 18px; border: 1px solid #f4f8fe; background: linear-gradient(90deg, #fff 2px, #5479ae 2px, #5479ae 3px, #fff 3px); margin-right: 7px; }
.hsplit.end { margin: 0 20px 0 8px; }
.hthumb { width: 251px; height: 19px; margin-left: 8px; border: 1px solid #5d7395; border-radius: 2px; background: linear-gradient(#fcfdfe, #d7dfec 50%, #b5c4db 51%, #cad6e7); display: flex; align-items: center; justify-content: center; }
.hthumb i { width: 8px; height: 7px; background: repeating-linear-gradient(90deg, #647896 0 1px, #eef3fa 1px 2px); }
.right { margin-left: auto; }

/* status bar */
.status { height: 27px; flex: none; display: flex; align-items: center; border-top: 2px solid #567db0; background: linear-gradient(#dceafb, #c7ddf8 35%, #b3d0f5 37%, #d8e9fd); color: #15428b; }
.ready { width: 53px; height: 21px; padding-left: 7px; line-height: 22px; letter-spacing: .4px; border-right: 1px solid #7a9ac8; }
.macro { width: 37px; height: 21px; border-right: 1px solid #7a9ac8; padding: 1px 0 0 9px; }
.zoom { margin-left: auto; width: 314px; height: 25px; border-left: 1px solid #577fb4; background: linear-gradient(#b8d3f6, #97bcec 35%, #78a6e1 37%, #b8d8fa); display: flex; align-items: center; }
.views { width: 70px; height: 24px; margin: -2px 0 0 5px; display: flex; border: 1px solid #7798c5; border-radius: 2px; }
.views span { flex: 1; display: flex; align-items: center; justify-content: center; }
.views .on { background: linear-gradient(#e5b979, #ffc65f 50%, #ffeb9b); }
.percent { width: 41px; margin-left: 8px; color: #14346e; letter-spacing: .1px; }
.slider { margin-top: -3px; }
.grip { margin: 10px 0 0 8px; }
```
